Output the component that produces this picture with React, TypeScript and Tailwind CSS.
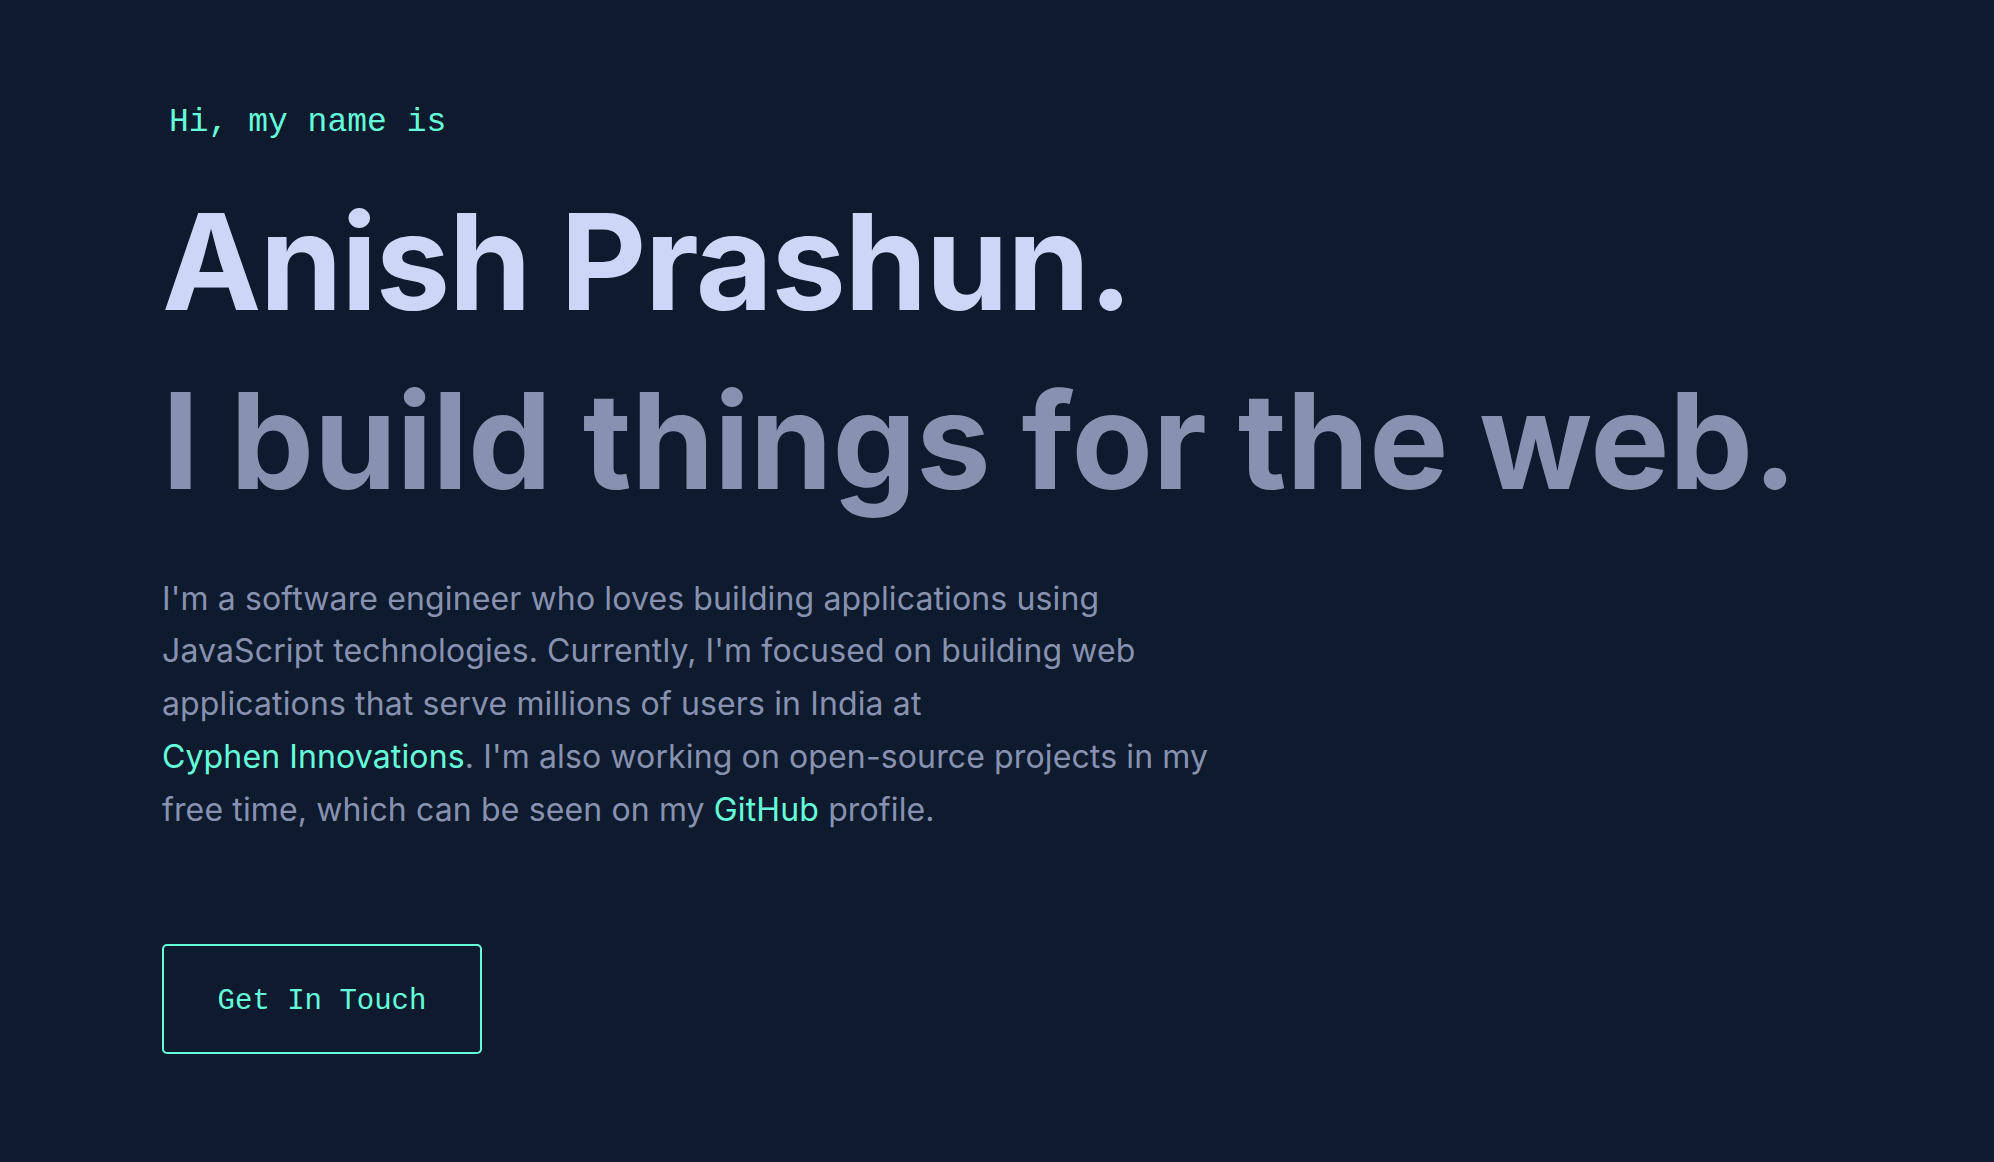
import React from 'react';

const mono = { fontFamily: '"Liberation Mono", "DejaVu Sans Mono", monospace' };

const Hero = () => {
  return (
    <section className="min-h-screen w-full bg-[#0e1a2e] pl-[162px] pt-[106px] font-['Inter',sans-serif]">
      <div className="flex flex-col items-start">
        <p className="ml-[7px] text-[33px] leading-none text-[#64ffda]" style={mono}>
          Hi, my name is
        </p>
        <h1 className="mt-[50px] text-[133px] font-bold leading-[1.1] tracking-[-0.011em] text-[#ccd6f6]">
          Anish Prashun.
        </h1>
        <h2 className="mt-[33px] text-[133px] font-bold leading-[1.1] tracking-[-0.002em] text-[#8892b0]">
          I build things for the web.
        </h2>
        <p className="mt-[58px] text-[32px] leading-[1.65] tracking-[0.004em] text-[#8892b0]">
          I'm a software engineer who loves building applications using
          <br />
          JavaScript technologies. Currently, I'm focused on building web
          <br />
          applications that serve millions of users in India at
          <br />
          <a href="#" className="text-[#64ffda]">
            Cyphen Innovations
          </a>
          . I'm also working on open-source projects in my
          <br />
          free time, which can be seen on my{' '}
          <a href="#" className="text-[#64ffda]">
            GitHub
          </a>{' '}
          profile.
        </p>
        <a
          href="#"
          className="mt-[107px] flex h-[110px] w-[320px] items-center justify-center rounded-[5px] border-2 border-[#64ffda] pt-[6px] text-[29px] text-[#64ffda]"
          style={mono}
        >
          Get In Touch
        </a>
      </div>
    </section>
  );
};

export default function App() {
  return <Hero />;
}
